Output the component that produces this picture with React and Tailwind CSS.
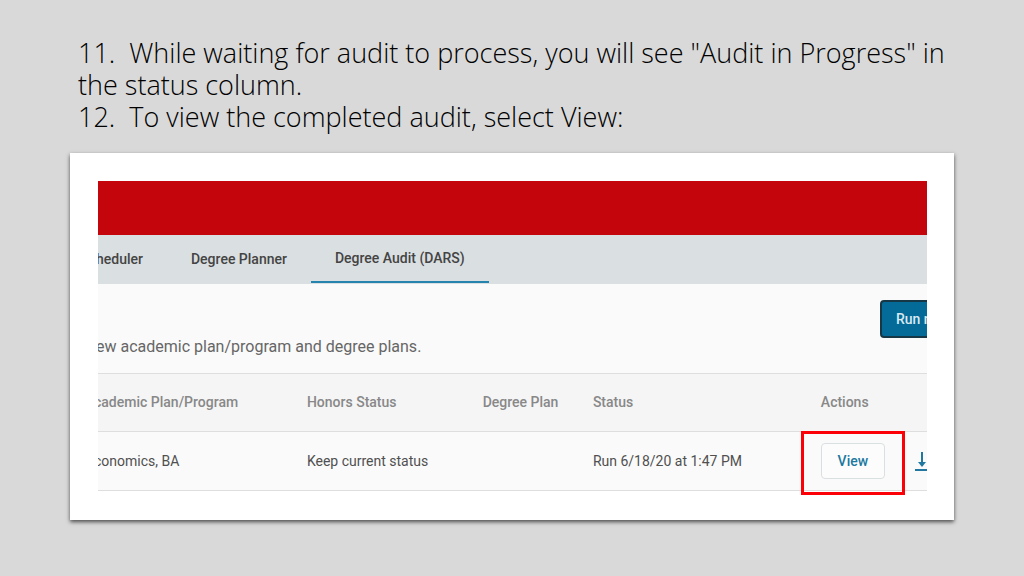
import { clsx } from 'clsx';

const tabs = [
    { label: 'heduler' },
    { label: 'Degree Planner' },
    { label: 'Degree Audit (DARS)', active: true },
];

const audits = [
    { program: 'conomics, BA', honors: 'Keep current status', plan: '', status: 'Run 6/18/20 at 1:47 PM' },
];

export default function App() {
    return (
        <main className="min-h-screen bg-[#d9d9d9] px-[70px] pt-[37px] pb-14">
            <h1 className="ml-2 font-['Open_Sans','Noto_Sans',sans-serif] text-[27px] font-light leading-8 text-black">
                <span className="block whitespace-pre-wrap">11.  While waiting for audit to process, you will see "Audit in Progress" in the status column.</span>
                <span className="block whitespace-pre-wrap">12.  To view the completed audit, select View:</span>
            </h1>

            <section className="mt-5 border border-white bg-white pt-[27px] pr-[26px] pb-7 pl-[27px] shadow-[0_2px_4px_rgba(0,0,0,0.65)]">
                <div className="overflow-x-clip bg-[#fafafa] font-[Roboto,sans-serif]">
                    <div className="h-[54px] bg-[#c5050c]" />
                    <TabBar />
                    <Intro />
                    <AuditTable />
                </div>
            </section>
        </main>
    );
}

function TabBar() {
    return (
        <nav className="flex h-[49px] items-stretch bg-[#dadfe1] pb-px text-sm font-medium text-[#444]">
            {tabs.map((tab) => (
                <a
                    key={tab.label}
                    href="#"
                    className={clsx(
                        'flex items-center px-6 first:-ml-0.5 first:pl-0',
                        tab.active && 'border-b-2 border-[#2484ae]'
                    )}
                >
                    {tab.label}
                </a>
            ))}
        </nav>
    );
}

function Intro() {
    return (
        <div className="flex h-[89px] items-start justify-between pt-4">
            <p className="-ml-0.5 mt-[35px] text-base leading-6 text-[#666]">ew academic plan/program and degree plans.</p>
            {/* The button runs off the right edge */}
            <div className="w-[47px] shrink-0">
                <button className="h-[38px] w-32 rounded-sm border-2 border-[#163746] bg-[#046b99] pl-3.5 text-left text-sm font-medium whitespace-nowrap text-[#dbeaf1]">
                    Run new audit
                </button>
            </div>
        </div>
    );
}

function AuditTable() {
    return (
        <table className="w-full table-fixed border-collapse text-left text-sm">
            <colgroup>
                <col className="w-[25.2%]" />
                <col className="w-[21.2%]" />
                <col className="w-[13.3%]" />
                <col className="w-[27.5%]" />
                <col />
            </colgroup>
            <thead className="bg-[#f5f5f5] text-[#888]">
                <tr className="h-[58px] border-y border-[#dedede]">
                    <th className="pb-0.5 font-medium"><span className="-ml-1">cademic Plan/Program</span></th>
                    <th className="pb-0.5 font-medium">Honors Status</th>
                    <th className="pb-0.5 font-medium">Degree Plan</th>
                    <th className="pb-0.5 font-medium">Status</th>
                    <th className="pb-0.5 font-medium">Actions</th>
                </tr>
            </thead>
            <tbody className="text-[#505050]">
                {audits.map((audit) => (
                    <tr key={audit.program} className="h-[59px] border-b border-[#dedede]">
                        <td><span className="-ml-1">{audit.program}</span></td>
                        <td>{audit.honors}</td>
                        <td>{audit.plan}</td>
                        <td>{audit.status}</td>
                        <td>
                            <div className="flex items-center gap-7">
                                <ViewButton />
                                <button aria-label="Download audit" className="shrink-0 text-[#2078a0]">
                                    <DownloadIcon />
                                </button>
                            </div>
                        </td>
                    </tr>
                ))}
            </tbody>
        </table>
    );
}

function ViewButton() {
    return (
        <div className="relative shrink-0">
            <button className="block h-9 w-16 rounded-sm border border-[#dadfe1] bg-[#fcfcfc] text-sm font-medium text-[#2078a0]">
                View
            </button>
            {/* Callout box */}
            <span className="pointer-events-none absolute -inset-x-5 -top-3 -bottom-4 border-3 border-[#fb0007]" />
        </div>
    );
}

function DownloadIcon() {
    return (
        <svg width="18" height="20" viewBox="0 0 18 20" fill="none" stroke="currentColor" strokeWidth="2">
            <path d="M9 1v12" />
            <path d="M5 11h8l-4 5z" fill="currentColor" stroke="none" />
            <path d="M2 19h16" />
        </svg>
    );
}
